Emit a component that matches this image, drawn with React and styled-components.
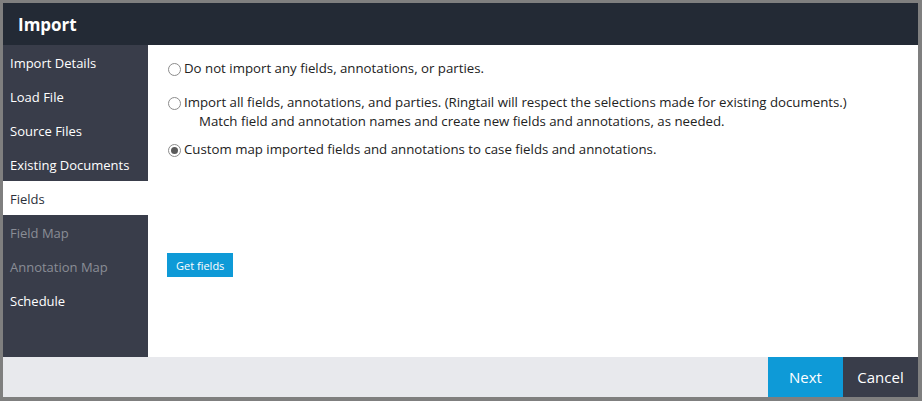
import React, { useState } from 'react';
import styled, { createGlobalStyle } from 'styled-components';

const GlobalStyle = createGlobalStyle`
  html, body {
    margin: 0;
    padding: 0;
    background: #7f7f7f;
  }
  body {
    font-family: "Open Sans", "Noto Sans", sans-serif;
  }
`;

const Frame = styled.div`
  width: 922px;
  height: 401px;
  box-sizing: border-box;
  padding: 3px 4px 4px 3px;
  background: #7f7f7f;
`;

const Dialog = styled.div`
  display: flex;
  flex-direction: column;
  height: 100%;
  background: #ffffff;
`;

const Header = styled.div`
  height: 42px;
  flex: none;
  display: flex;
  align-items: center;
  padding-left: 15px;
  background: #232a35;
  color: #ffffff;
  font-size: 17px;
  font-weight: 700;
`;

const Body = styled.div`
  flex: 1;
  display: flex;
  min-height: 0;
`;

const Sidebar = styled.nav`
  width: 145px;
  flex: none;
  background: #393d4a;
`;

const NavItem = styled.div`
  height: 34px;
  display: flex;
  align-items: center;
  padding: 2px 0 0 7px;
  box-sizing: border-box;
  font-size: 13px;
  color: ${(p) => (p.$active ? '#2b2f3a' : p.$disabled ? '#8a8d96' : '#ffffff')};
  background: ${(p) => (p.$active ? '#ffffff' : 'transparent')};
`;

const Content = styled.div`
  flex: 1;
  padding: 14px 0 0 20px;
  color: #222222;
  font-size: 13.25px;
`;

const Option = styled.label`
  display: flex;
  align-items: flex-start;
  margin-bottom: ${(p) => p.$gap}px;
  cursor: pointer;
`;

const Radio = styled.span`
  width: 11px;
  height: 11px;
  flex: none;
  margin-top: 4px;
  margin-right: 3px;
  border: 1px solid #8c8c8c;
  border-radius: 50%;
  background: #ffffff;
  display: flex;
  align-items: center;
  justify-content: center;

  &::after {
    content: '';
    display: ${(p) => (p.$checked ? 'block' : 'none')};
    width: 7px;
    height: 7px;
    border-radius: 50%;
    background: #5a5a5a;
  }
`;

const OptionText = styled.div`
  line-height: 19px;
`;

const SubLine = styled.div`
  padding-left: 15px;
`;

const SmallButton = styled.button`
  margin-top: 94px;
  margin-left: -1px;
  height: 24px;
  padding: 0 9px;
  border: none;
  background: #0e9ad7;
  color: #ffffff;
  font-family: inherit;
  font-size: 11px;
  cursor: pointer;
`;

const Footer = styled.div`
  height: 40px;
  flex: none;
  display: flex;
  justify-content: flex-end;
  background: #e8e9ed;
`;

const FooterButton = styled.button`
  width: 75px;
  border: none;
  background: ${(p) => (p.$primary ? '#0e9ad7' : '#393d4a')};
  color: #ffffff;
  font-family: inherit;
  font-size: 15px;
  cursor: pointer;
`;

const steps = [
  { label: 'Import Details' },
  { label: 'Load File' },
  { label: 'Source Files' },
  { label: 'Existing Documents' },
  { label: 'Fields', active: true },
  { label: 'Field Map', disabled: true },
  { label: 'Annotation Map', disabled: true },
  { label: 'Schedule' },
];

const App = () => {
  const [choice, setChoice] = useState('custom');

  return (
    <>
      <GlobalStyle />
      <Frame>
        <Dialog>
          <Header>Import</Header>
          <Body>
            <Sidebar>
              {steps.map((s) => (
                <NavItem key={s.label} $active={s.active} $disabled={s.disabled}>
                  {s.label}
                </NavItem>
              ))}
            </Sidebar>
            <Content>
              <Option $gap={15} onClick={() => setChoice('none')}>
                <Radio $checked={choice === 'none'} />
                <OptionText>Do not import any fields, annotations, or parties.</OptionText>
              </Option>
              <Option $gap={9} onClick={() => setChoice('all')}>
                <Radio $checked={choice === 'all'} />
                <OptionText>
                  Import all fields, annotations, and parties. (Ringtail will respect the selections made for existing documents.)
                  <SubLine>Match field and annotation names and create new fields and annotations, as needed.</SubLine>
                </OptionText>
              </Option>
              <Option $gap={0} onClick={() => setChoice('custom')}>
                <Radio $checked={choice === 'custom'} />
                <OptionText>Custom map imported fields and annotations to case fields and annotations.</OptionText>
              </Option>
              <SmallButton>Get fields</SmallButton>
            </Content>
          </Body>
          <Footer>
            <FooterButton $primary>Next</FooterButton>
            <FooterButton>Cancel</FooterButton>
          </Footer>
        </Dialog>
      </Frame>
    </>
  );
};

export default App;
